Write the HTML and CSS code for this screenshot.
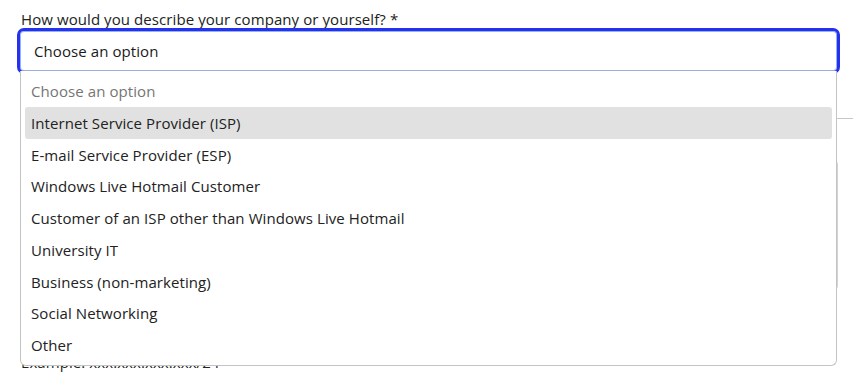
FILE: index.html
```html
<!DOCTYPE html>
<html lang="en">
<head>
<meta charset="utf-8">
<title>Company description</title>
<link rel="stylesheet" href="styles.css">
</head>
<body>
<div class="page">
  <label class="label" for="kind">How would you describe your company or yourself? *</label>
  <div class="field">
    <div class="select" id="kind">Choose an option</div>
    <ul class="menu">
      <li class="opt placeholder">Choose an option</li>
      <li class="opt active">Internet Service Provider (ISP)</li>
      <li class="opt">E-mail Service Provider (ESP)</li>
      <li class="opt">Windows Live Hotmail Customer</li>
      <li class="opt">Customer of an ISP other than Windows Live Hotmail</li>
      <li class="opt">University IT</li>
      <li class="opt">Business (non-marketing)</li>
      <li class="opt">Social Networking</li>
      <li class="opt">Other</li>
    </ul>
  </div>
  <div class="behind">
    <div class="rule"></div>
    <div class="textarea"></div>
    <p class="hint">Example: xxx.xxx.xxx.xxx/24</p>
  </div>
</div>
</body>
</html>
```

FILE: styles.css
```css
html, body {
  margin: 0;
  padding: 0;
  background: #ffffff;
}
body {
  font-family: "Open Sans", "Noto Sans", sans-serif;
  font-size: 15px;
  letter-spacing: 0.08px;
  color: #222222;
  overflow: hidden;
}
.page {
  padding: 10px 0 0 21px;
  width: 832px;
}
.label {
  display: block;
  line-height: 19px;
  color: #222222;
}
.field {
  position: relative;
  margin-top: 2px;
  margin-left: -1px;
  width: 817px;
}
.select {
  box-sizing: border-box;
  height: 40px;
  border: 1px solid #8fb6f4;
  border-bottom-color: #9bb0d6;
  border-radius: 4px;
  outline: 3px solid #2630ee;
  outline-offset: 0;
  padding: 1px 0 0 13px;
  line-height: 37px;
  color: #1a1a1a;
  background: #fff;
  position: relative;
  z-index: 2;
}
.menu {
  position: absolute;
  left: 0;
  top: 40px;
  width: 817px;
  box-sizing: border-box;
  margin: 0;
  padding: 4px;
  list-style: none;
  background: #fff;
  border: 1px solid #c4c4c4;
  border-top: none;
  border-radius: 0 0 6px 6px;
  z-index: 3;
}
.opt {
  box-sizing: border-box;
  height: 31.75px;
  line-height: 30.75px;
  padding: 1px 0 0 6px;
  border-radius: 3px;
  color: #222222;
  white-space: nowrap;
}
.opt.placeholder {
  color: #757575;
}
.opt.active {
  background: #e1e1e1;
}
.behind {
  position: relative;
}
.rule {
  margin-top: 47px;
  margin-left: 780px;
  height: 1px;
  background: #c6c6c6;
}
.textarea {
  margin-top: 41px;
  margin-left: -1px;
  width: 818px;
  height: 130px;
  box-sizing: border-box;
  border: 1px solid #d2d2d2;
  border-radius: 4px;
}
.hint {
  margin: 63px 0 0 0;
  line-height: 19px;
  color: #222222;
}
```
